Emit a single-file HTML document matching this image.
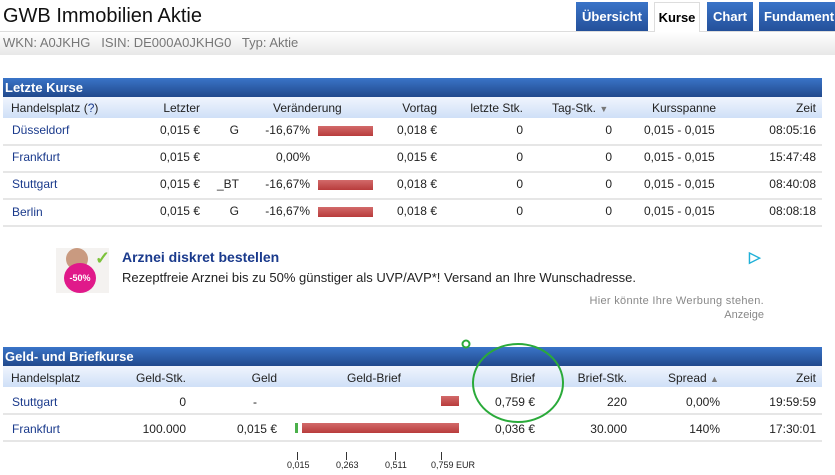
<!DOCTYPE html>
<html><head><meta charset="utf-8"><style>
*{margin:0;padding:0;box-sizing:border-box}
body{width:835px;height:475px;overflow:hidden;background:#fff;font-family:"Liberation Sans",Arial,sans-serif;font-size:12px;color:#222;position:relative}
.a{position:absolute;white-space:nowrap}
.r{text-align:right}
.tab{position:absolute;top:2px;height:29px;background:linear-gradient(#3a74c8,#24509a);color:#fff;font-weight:bold;font-size:13px;line-height:29px;text-align:center}
.sec{position:absolute;left:3px;width:819px;height:19px;background:linear-gradient(#3a74c8,#21498c);color:#fff;font-weight:bold;font-size:13px;line-height:19px;padding-left:2px}
.hd{position:absolute;left:3px;width:819px;height:21px;background:linear-gradient(#f0f5fd,#cfe0f7)}
.sep{position:absolute;left:3px;width:819px;height:2px;background:#e6e6e6}
.lnk{color:#1a3a8c}
.bar{position:absolute;height:10px;background:linear-gradient(#d26a6a,#b83c3c)}
</style></head><body>
<div class="a" style="left:3px;top:5px;font-size:20px;color:#111">GWB Immobilien Aktie</div>
<div class="a" style="left:0;top:31px;width:835px;height:24px;background:linear-gradient(#fff,#e8e8e8);border-top:1px solid #ddd"></div>
<div class="a" style="left:3px;top:35px;color:#777;font-size:13px">WKN: A0JKHG&nbsp;&nbsp; ISIN: DE000A0JKHG0&nbsp;&nbsp; Typ: Aktie</div>
<div class="tab" style="left:576px;width:72px">Übersicht</div>
<div class="tab" style="left:654px;width:46px;height:30px;background:#fff;color:#000;border:1px solid #ddd;border-bottom:none">Kurse</div>
<div class="tab" style="left:707px;width:46px">Chart</div>
<div class="tab" style="left:759px;width:80px;text-align:left;padding-left:5px">Fundament</div>

<div class="sec" style="top:78px">Letzte Kurse</div>
<div class="hd" style="top:97px"></div>
<div class="a" style="left:11px;top:101px">Handelsplatz (<span class="lnk">?</span>)</div>
<div class="a r" style="right:635px;top:101px">Letzter</div>
<div class="a" style="left:273px;top:101px">Veränderung</div>
<div class="a r" style="right:398px;top:101px">Vortag</div>
<div class="a r" style="right:312px;top:101px">letzte Stk.</div>
<div class="a" style="left:552px;top:101px">Tag-Stk. <span style="color:#777;font-size:9px">▼</span></div>
<div class="a" style="left:652px;top:101px">Kursspanne</div>
<div class="a r" style="right:19px;top:101px">Zeit</div>

<div class="sep" style="top:144px"></div><div class="sep" style="top:171px"></div><div class="sep" style="top:198px"></div><div class="sep" style="top:225px"></div>

<div class="a lnk" style="left:12px;top:123px">Düsseldorf</div>
<div class="a lnk" style="left:12px;top:150px">Frankfurt</div>
<div class="a lnk" style="left:12px;top:177px">Stuttgart</div>
<div class="a lnk" style="left:12px;top:205px">Berlin</div>
<div class="a r" style="right:635px;top:117px;line-height:27px">0,015 €<br>0,015 €<br>0,015 €<br>0,015 €</div>
<div class="a r" style="right:596px;top:117px;line-height:27px">G<br>&nbsp;<br>_BT<br>G</div>
<div class="a r" style="right:525px;top:117px;line-height:27px">-16,67%<br>0,00%<br>-16,67%<br>-16,67%</div>
<div class="bar" style="left:318px;top:126px;width:55px"></div>
<div class="bar" style="left:318px;top:180px;width:55px"></div>
<div class="bar" style="left:318px;top:207px;width:55px"></div>
<div class="a r" style="right:398px;top:117px;line-height:27px">0,018 €<br>0,015 €<br>0,018 €<br>0,018 €</div>
<div class="a r" style="right:312px;top:117px;line-height:27px">0<br>0<br>0<br>0</div>
<div class="a r" style="right:223px;top:117px;line-height:27px">0<br>0<br>0<br>0</div>
<div class="a" style="left:644px;top:117px;line-height:27px">0,015 - 0,015<br>0,015 - 0,015<br>0,015 - 0,015<br>0,015 - 0,015</div>
<div class="a r" style="right:19px;top:117px;line-height:27px">08:05:16<br>15:47:48<br>08:40:08<br>08:08:18</div>

<div class="a" style="left:56px;top:248px;width:53px;height:45px;background:#f4f2f0"></div>
<div class="a" style="left:66px;top:248px;width:22px;height:22px;border-radius:50%;background:#c99a80"></div>
<div class="a" style="left:64px;top:263px;width:32px;height:30px;border-radius:50%;background:#e0198a;color:#fff;font-size:9px;font-weight:bold;text-align:center;line-height:30px">-50%</div>
<div class="a" style="left:95px;top:248px;color:#7cc23a;font-size:18px;font-weight:bold">✓</div>
<div class="a" style="left:122px;top:249px;color:#1a3a8c;font-weight:bold;font-size:14px">Arznei diskret bestellen</div>
<div class="a" style="left:122px;top:270px;font-size:13px">Rezeptfreie Arznei bis zu 50% günstiger als UVP/AVP*! Versand an Ihre Wunschadresse.</div>
<div class="a" style="left:749px;top:248px;color:#1fb0d8;font-size:15px;font-weight:bold">▷</div>
<div class="a r" style="right:71px;top:295px;color:#888;font-size:11px;letter-spacing:0.3px">Hier könnte Ihre Werbung stehen.</div>
<div class="a r" style="right:71px;top:309px;color:#888;font-size:11px">Anzeige</div>

<div class="sec" style="top:347px">Geld- und Briefkurse</div>
<div class="hd" style="top:366px"></div>
<div class="a" style="left:11px;top:371px">Handelsplatz</div>
<div class="a r" style="right:649px;top:371px">Geld-Stk.</div>
<div class="a r" style="right:558px;top:371px">Geld</div>
<div class="a" style="left:347px;top:371px">Geld-Brief</div>
<div class="a r" style="right:300px;top:371px">Brief</div>
<div class="a r" style="right:208px;top:371px">Brief-Stk.</div>
<div class="a" style="left:668px;top:371px">Spread <span style="color:#777;font-size:9px">▲</span></div>
<div class="a r" style="right:19px;top:371px">Zeit</div>
<div class="sep" style="top:413px"></div><div class="sep" style="top:440px"></div>
<div class="a lnk" style="left:12px;top:395px">Stuttgart</div>
<div class="a lnk" style="left:12px;top:422px">Frankfurt</div>
<div class="a r" style="right:649px;top:389px;line-height:27px">0<br>100.000</div>
<div class="a r" style="right:558px;top:389px;line-height:27px">-&nbsp;&nbsp;&nbsp;&nbsp;&nbsp;&nbsp;<br>0,015 €</div>
<div class="bar" style="left:441px;top:396px;width:18px"></div>
<div class="a" style="left:295px;top:423px;width:3px;height:10px;background:#4ab04a"></div>
<div class="bar" style="left:302px;top:423px;width:157px"></div>
<div class="a r" style="right:300px;top:389px;line-height:27px">0,759 €<br>0,036 €</div>
<div class="a r" style="right:208px;top:389px;line-height:27px">220<br>30.000</div>
<div class="a r" style="right:115px;top:389px;line-height:27px">0,00%<br>140%</div>
<div class="a r" style="right:19px;top:389px;line-height:27px">19:59:59<br>17:30:01</div>

<div class="a" style="left:297px;top:452px;width:1px;height:8px;background:#333"></div>
<div class="a" style="left:346px;top:452px;width:1px;height:8px;background:#333"></div>
<div class="a" style="left:395px;top:452px;width:1px;height:8px;background:#333"></div>
<div class="a" style="left:441px;top:452px;width:1px;height:8px;background:#333"></div>
<div class="a" style="left:287px;top:460px;font-size:9px">0,015</div>
<div class="a" style="left:336px;top:460px;font-size:9px">0,263</div>
<div class="a" style="left:385px;top:460px;font-size:9px">0,511</div>
<div class="a" style="left:431px;top:460px;font-size:9px">0,759 EUR</div>

<svg class="a" style="left:0;top:0" width="835" height="475"><circle cx="466" cy="344" r="3.5" fill="none" stroke="#2aaa3a" stroke-width="2"/><ellipse cx="518" cy="383" rx="45" ry="39" fill="none" stroke="#2aaa3a" stroke-width="2"/></svg>
</body></html>
